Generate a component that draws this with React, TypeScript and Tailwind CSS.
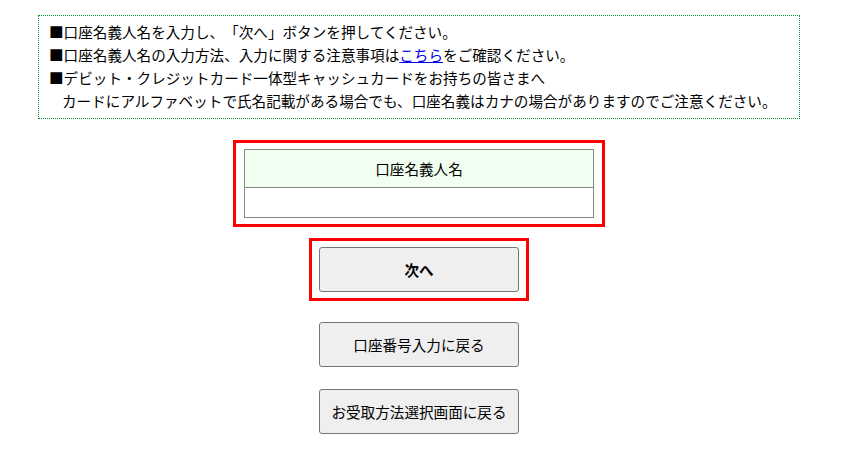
export default function App() {
  const font = { fontFamily: '"Noto Sans CJK JP", "Noto Sans", sans-serif' };
  return (
    <div className="w-[847px] h-[452px] bg-white text-black [text-spacing-trim:space-all]" style={font}>
      <div className="ml-[38px] w-[762px] pt-[15px] flex flex-col items-center">
        <div className="w-full border border-dotted border-[#009933] pt-[4px] pb-[6px] pl-[10px] text-[14.6px] leading-[23px]">
          <p>■口座名義人名を入力し、「次へ」ボタンを押してください。</p>
          <p>
            ■口座名義人名の入力方法、入力に関する注意事項は
            <a href="#" className="text-[#0000ee] underline">こちら</a>
            をご確認ください。
          </p>
          <p>■デビット・クレジットカード一体型キャッシュカードをお持ちの皆さまへ</p>
          <p className="pl-[13px]">カードにアルファベットで氏名記載がある場合でも、口座名義はカナの場合がありますのでご注意ください。</p>
        </div>

        <div className="mt-[21px] border-[3px] border-[#ff0000] px-[8px] py-[6px]">
          <table className="w-[350px] border-collapse text-[14.6px]">
            <tbody>
              <tr>
                <th className="h-[38px] border border-[#888888] bg-[#f0fff0] font-normal text-center">口座名義人名</th>
              </tr>
              <tr>
                <td className="h-[30px] border border-[#888888]"></td>
              </tr>
            </tbody>
          </table>
        </div>

        <div className="mt-[11px] border-[3px] border-[#ff0000] px-[7px] py-[6px]">
          <button className="w-[200px] h-[45px] rounded-[3px] border border-[#767676] bg-[#efefef] text-[14.6px] font-bold">次へ</button>
        </div>

        <button className="mt-[21px] w-[200px] h-[45px] rounded-[3px] border border-[#767676] bg-[#efefef] text-[14.6px]">口座番号入力に戻る</button>
        <button className="mt-[22px] w-[200px] h-[45px] rounded-[3px] border border-[#767676] bg-[#efefef] text-[14.6px]">お受取方法選択画面に戻る</button>
      </div>
    </div>
  );
}
